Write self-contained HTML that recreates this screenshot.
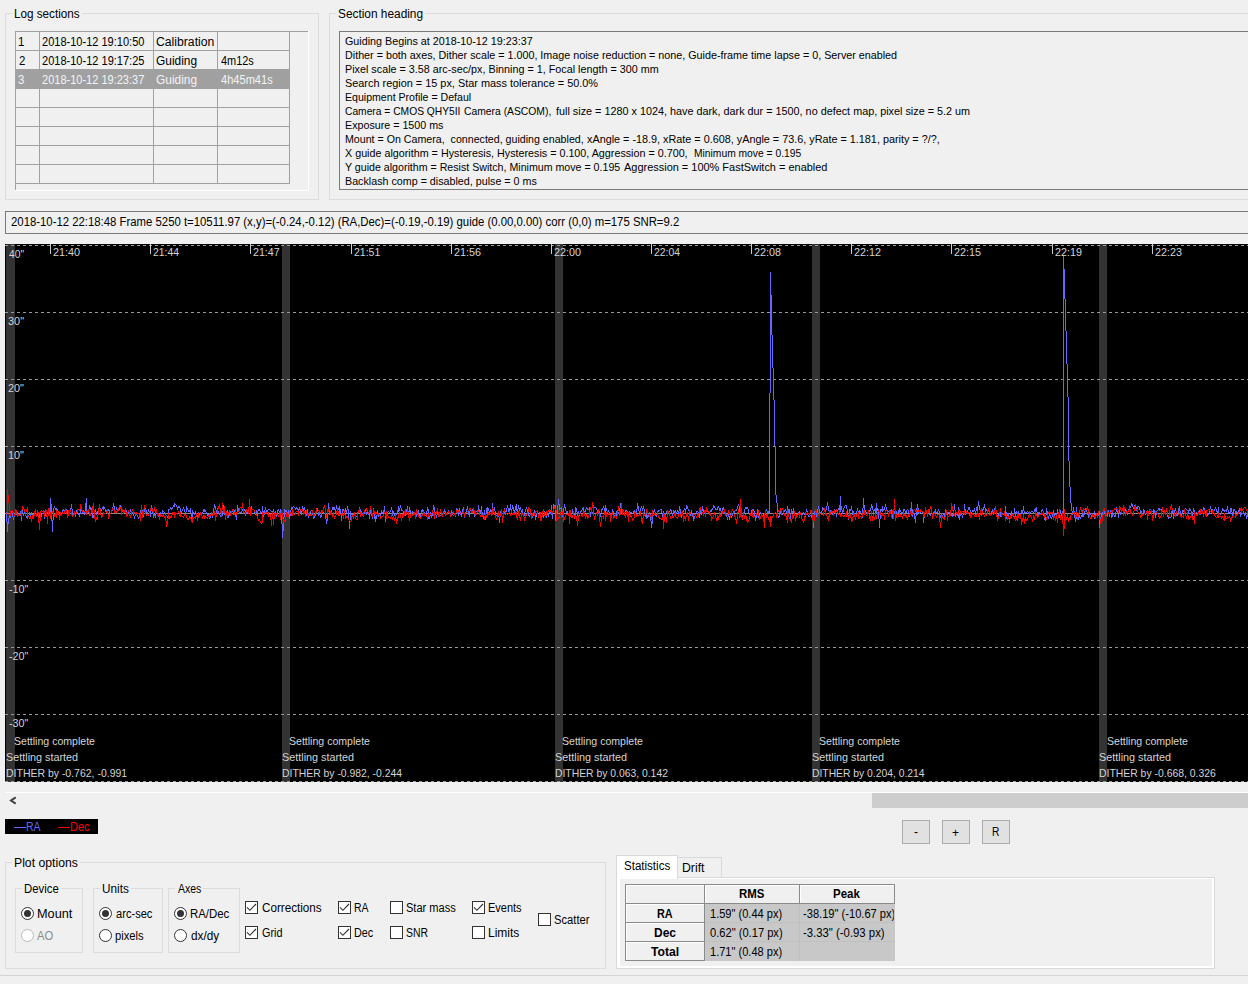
<!DOCTYPE html>
<html lang="en"><head><meta charset="utf-8"><title>PHD2 Log Viewer</title>
<style>
html,body{margin:0;padding:0}
body{width:1248px;height:984px;overflow:hidden;background:#f0f0f0;position:relative;font-family:"Liberation Sans",sans-serif;color:#000}
.t{position:absolute;white-space:pre;line-height:16px;height:16px;transform-origin:0 0}
.ui{font-size:12px}
.ar{font-size:11px}
.gl{color:#d4d4d4}
.gt{background:#f0f0f0}
.sel{color:#f4f4f4}
.dis{color:#8c8c8c}
.b{font-weight:bold}
.lra{color:#6464ff}
.ldec{color:#ff0000}
.box{position:absolute;box-sizing:border-box}
.gb{border:1px solid #dcdcdc}
.gap{position:absolute;background:#f0f0f0;height:3px}
.cb{position:absolute;width:13px;height:13px;box-sizing:border-box;border:1px solid #333;background:#fff}
.rb{position:absolute;width:13px;height:13px;box-sizing:border-box;border:1px solid #333;background:#fff;border-radius:50%}
.rb.on::after{content:"";position:absolute;left:2px;top:2px;width:7px;height:7px;border-radius:50%;background:#333}
.rb.off{border-color:#bcbcbc}
.btn{position:absolute;box-sizing:border-box;border:1px solid #adadad;background:#e1e1e1}
svg{position:absolute;display:block}
</style></head><body>

<div class="box gb" style="left:5px;top:13px;width:314px;height:187px"></div>
<div class="gap" style="left:12px;top:12px;width:70px"></div>
<div class="box gb" style="left:329px;top:13px;width:972px;height:187px"></div>
<div class="gap" style="left:336px;top:12px;width:89px"></div>
<div class="box gb" style="left:5px;top:862px;width:601px;height:107px"></div>
<div class="gap" style="left:12px;top:861px;width:68px"></div>
<div class="box gb" style="left:15px;top:888px;width:68px;height:65px"></div>
<div class="gap" style="left:22px;top:887px;width:39px"></div>
<div class="box gb" style="left:93px;top:888px;width:70px;height:65px"></div>
<div class="gap" style="left:100px;top:887px;width:31px"></div>
<div class="box gb" style="left:168px;top:888px;width:72px;height:65px"></div>
<div class="gap" style="left:175px;top:887px;width:28px"></div>
<svg style="left:15px;top:31px" width="294" height="160" shape-rendering="crispEdges">
<rect x="1" y="38" width="274" height="19" fill="#a0a0a0"/>
<path d="M0 0.5H275M0 19.5H275M0 38.5H275M0 57.5H275M0 76.5H275M0 95.5H275M0 114.5H275M0 133.5H275M0 152.5H275M0.5 0V159M24.5 0V153M138.5 0V153M202.5 0V153M274.5 0V153" stroke="#a0a0a0" fill="none"/>
<path d="M0 0.5H294" stroke="#a0a0a0" fill="none"/>
<path d="M0 159.5H294M293.5 0V160" stroke="#ffffff" fill="none"/>
</svg>
<div class="box" style="left:339px;top:31px;width:960px;height:159px;border:1px solid #7a7a7a;background:#f0f0f0"></div>
<div class="box" style="left:5px;top:211px;width:1300px;height:23px;border:1px solid #7a7a7a;background:#f0f0f0"></div>
<svg style="left:5px;top:244px" width="1243" height="538" shape-rendering="crispEdges">
<rect width="1243" height="538" fill="#000"/>
<rect x="1" y="0" width="9" height="538" fill="#333333"/>
<rect x="277" y="0" width="8" height="538" fill="#333333"/>
<rect x="550" y="0" width="8" height="538" fill="#333333"/>
<rect x="807" y="0" width="8" height="538" fill="#333333"/>
<rect x="1094" y="0" width="8" height="538" fill="#333333"/>
<path d="M0 1.5H1243M0 68.5H1243M0 135.5H1243M0 202.5H1243M0 336.5H1243M0 403.5H1243M0 470.5H1243M0 537.5H1243" stroke="#989898" stroke-dasharray="3 3" fill="none"/>
<path d="M0 269.5H1243" stroke="#8c8c8c" fill="none"/>
<path d="M45.5 0V10M145.5 0V10M245.5 0V10M346.5 0V10M446.5 0V10M546.5 0V10M646.5 0V10M746.5 0V10M846.5 0V10M946.5 0V10M1047.5 0V10M1147.5 0V10" stroke="#c8c8c8" fill="none"/>
<path d="M1.5 268v10M2.5 278v10M3.5 274v6M4.5 271v3M5.5 271v3M6.5 267v4M7.5 269v4M8.5 273v3M9.5 270v3M10.5 265v5M11.5 268v3M12.5 268v2M13.5 270v2M14.5 270v2M15.5 267v5M16.5 269v8M17.5 266v3M18.5 269v3M19.5 268v2M20.5 269v3M21.5 272v2M22.5 269v6M23.5 271v2M24.5 268v3M25.5 270v3M26.5 268v3M27.5 270v2M28.5 270v4M29.5 267v3M30.5 268v2M31.5 269v1M32.5 269v3M33.5 272v7M34.5 269v5M35.5 272v3M36.5 270v3M37.5 269v1M38.5 269v1M39.5 267v8M40.5 269v3M41.5 270v1M42.5 268v2M43.5 266v2M44.5 267v2M45.5 254v17M46.5 260v17M47.5 276v12M48.5 264v12M49.5 262v2M50.5 264v2M51.5 264v2M52.5 265v2M53.5 267v1M54.5 268v2M55.5 270v2M56.5 269v3M57.5 266v3M58.5 265v2M59.5 266v1M60.5 264v2M61.5 265v1M62.5 266v3M63.5 267v5M64.5 268v1M65.5 264v4M66.5 260v5M67.5 265v6M68.5 269v2M69.5 267v3M70.5 270v3M71.5 266v4M72.5 268v2M73.5 269v2M74.5 270v3M75.5 263v7M76.5 264v3M77.5 267v2M78.5 266v2M79.5 267v4M80.5 259v8M81.5 254v13M82.5 267v2M83.5 265v4M84.5 261v4M85.5 263v3M86.5 264v5M87.5 269v5M88.5 271v3M89.5 268v4M90.5 265v3M91.5 268v3M92.5 267v2M93.5 265v3M94.5 261v4M95.5 264v4M96.5 265v2M97.5 263v2M98.5 262v4M99.5 263v2M100.5 265v3M101.5 266v1M102.5 267v1M103.5 265v2M104.5 266v5M105.5 269v1M106.5 267v2M107.5 263v4M108.5 259v4M109.5 262v5M110.5 266v4M111.5 263v3M112.5 265v3M113.5 266v1M114.5 263v3M115.5 261v2M116.5 262v9M117.5 265v3M118.5 266v2M119.5 267v1M120.5 266v1M121.5 266v3M122.5 269v3M123.5 268v2M124.5 268v2M125.5 265v3M126.5 268v3M127.5 268v2M128.5 269v3M129.5 272v3M130.5 269v3M131.5 270v1M132.5 271v2M133.5 273v2M134.5 269v4M135.5 266v3M136.5 267v1M137.5 266v3M138.5 268v5M139.5 262v6M140.5 264v3M141.5 266v3M142.5 268v2M143.5 265v3M144.5 267v2M145.5 265v8M146.5 261v6M147.5 264v6M148.5 270v4M149.5 270v2M150.5 270v4M151.5 265v5M152.5 269v2M153.5 271v2M154.5 270v2M155.5 268v2M156.5 269v1M157.5 266v4M158.5 267v1M159.5 268v1M160.5 269v2M161.5 271v1M162.5 272v2M163.5 265v7M164.5 265v1M165.5 263v2M166.5 264v2M167.5 263v2M168.5 261v2M169.5 259v4M170.5 260v1M171.5 261v2M172.5 263v3M173.5 262v2M174.5 262v2M175.5 264v4M176.5 267v2M177.5 265v2M178.5 263v2M179.5 265v3M180.5 268v1M181.5 262v6M182.5 264v2M183.5 266v2M184.5 266v2M185.5 264v5M186.5 269v6M187.5 266v7M188.5 268v2M189.5 269v2M190.5 267v2M191.5 269v3M192.5 271v2M193.5 268v4M194.5 270v2M195.5 268v2M196.5 269v2M197.5 268v2M198.5 265v3M199.5 265v3M200.5 266v2M201.5 268v2M202.5 270v2M203.5 270v1M204.5 269v6M205.5 271v3M206.5 268v3M207.5 270v4M208.5 264v6M209.5 260v4M210.5 262v4M211.5 266v3M212.5 264v3M213.5 267v3M214.5 269v2M215.5 271v2M216.5 269v4M217.5 267v5M218.5 261v6M219.5 265v6M220.5 271v3M221.5 270v2M222.5 266v8M223.5 270v4M224.5 269v3M225.5 267v2M226.5 267v1M227.5 267v1M228.5 268v3M229.5 266v3M230.5 269v4M231.5 269v7M232.5 261v8M233.5 264v4M234.5 268v2M235.5 268v1M236.5 267v2M237.5 265v2M238.5 267v2M239.5 265v2M240.5 266v6M241.5 268v2M242.5 268v1M243.5 263v5M244.5 258v5M245.5 263v6M246.5 262v5M247.5 265v1M248.5 265v1M249.5 266v3M250.5 269v2M251.5 266v3M252.5 267v5M253.5 265v2M254.5 265v2M255.5 267v3M256.5 268v1M257.5 262v7M258.5 267v6M259.5 266v5M260.5 263v3M261.5 266v3M262.5 266v2M263.5 265v1M264.5 265v1M265.5 266v1M266.5 267v1M267.5 267v1M268.5 265v3M269.5 268v5M270.5 267v3M271.5 270v3M272.5 266v4M273.5 265v2M274.5 267v4M275.5 265v10M276.5 266v14M277.5 280v14M278.5 273v14M279.5 265v8M280.5 266v2M281.5 266v2M282.5 268v3M283.5 266v4M284.5 270v5M285.5 266v6M286.5 263v3M287.5 263v3M288.5 262v1M289.5 263v1M290.5 264v2M291.5 263v2M292.5 264v2M293.5 265v3M294.5 263v3M295.5 266v3M296.5 267v4M297.5 262v5M298.5 264v3M299.5 263v3M300.5 266v3M301.5 269v3M302.5 265v4M303.5 269v5M304.5 269v3M305.5 267v2M306.5 266v1M307.5 267v4M308.5 271v4M309.5 272v2M310.5 269v3M311.5 266v3M312.5 264v4M313.5 268v4M314.5 268v3M315.5 271v3M316.5 267v6M317.5 267v1M318.5 268v1M319.5 269v1M320.5 270v5M321.5 275v5M322.5 266v11M323.5 259v7M324.5 265v6M325.5 268v2M326.5 266v2M327.5 263v3M328.5 263v3M329.5 263v3M330.5 265v4M331.5 261v4M332.5 263v3M333.5 264v2M334.5 262v8M335.5 265v6M336.5 271v6M337.5 265v6M338.5 265v2M339.5 267v2M340.5 264v4M341.5 266v4M342.5 262v4M343.5 265v11M344.5 276v9M345.5 267v9M346.5 269v2M347.5 270v2M348.5 269v2M349.5 270v1M350.5 271v2M351.5 272v1M352.5 268v4M353.5 266v3M354.5 263v3M355.5 265v3M356.5 267v2M357.5 269v3M358.5 268v4M359.5 267v3M360.5 265v3M361.5 268v3M362.5 268v2M363.5 269v2M364.5 266v9M365.5 265v5M366.5 268v4M367.5 270v5M368.5 264v6M369.5 269v6M370.5 272v6M371.5 271v4M372.5 266v5M373.5 269v4M374.5 271v1M375.5 269v3M376.5 266v3M377.5 268v2M378.5 266v3M379.5 262v8M380.5 270v8M381.5 268v6M382.5 268v1M383.5 267v1M384.5 268v1M385.5 266v2M386.5 263v3M387.5 266v6M388.5 267v3M389.5 269v3M390.5 270v1M391.5 269v2M392.5 266v3M393.5 262v6M394.5 264v3M395.5 261v3M396.5 264v3M397.5 266v1M398.5 267v2M399.5 268v4M400.5 269v3M401.5 265v4M402.5 262v5M403.5 267v6M404.5 263v5M405.5 266v3M406.5 268v2M407.5 267v2M408.5 268v1M409.5 269v1M410.5 270v2M411.5 268v5M412.5 268v3M413.5 266v4M414.5 270v4M415.5 270v3M416.5 266v4M417.5 265v3M418.5 266v2M419.5 268v2M420.5 269v1M421.5 267v4M422.5 263v4M423.5 265v10M424.5 272v3M425.5 268v4M426.5 271v3M427.5 266v6M428.5 261v5M429.5 263v7M430.5 268v3M431.5 271v3M432.5 268v3M433.5 269v2M434.5 271v2M435.5 271v1M436.5 270v1M437.5 269v1M438.5 268v2M439.5 265v3M440.5 267v4M441.5 269v1M442.5 268v2M443.5 266v2M444.5 268v2M445.5 269v2M446.5 266v3M447.5 268v3M448.5 271v1M449.5 269v2M450.5 269v4M451.5 264v5M452.5 265v4M453.5 268v4M454.5 264v4M455.5 267v4M456.5 270v3M457.5 265v5M458.5 263v6M459.5 269v5M460.5 268v3M461.5 265v3M462.5 262v4M463.5 266v5M464.5 267v6M465.5 266v1M466.5 267v2M467.5 265v2M468.5 266v3M469.5 269v4M470.5 268v3M471.5 267v1M472.5 266v4M473.5 261v5M474.5 265v4M475.5 266v3M476.5 262v6M477.5 268v5M478.5 271v4M479.5 266v5M480.5 270v6M481.5 264v6M482.5 263v9M483.5 264v3M484.5 267v2M485.5 265v3M486.5 266v6M487.5 259v10M488.5 265v3M489.5 263v4M490.5 267v4M491.5 271v1M492.5 269v2M493.5 267v6M494.5 273v6M495.5 267v6M496.5 269v2M497.5 269v1M498.5 267v2M499.5 264v6M500.5 267v4M501.5 264v4M502.5 261v3M503.5 264v4M504.5 264v3M505.5 260v6M506.5 265v3M507.5 261v4M508.5 263v4M509.5 266v3M510.5 262v4M511.5 260v7M512.5 265v3M513.5 261v4M514.5 264v3M515.5 263v3M516.5 266v3M517.5 265v6M518.5 271v2M519.5 268v4M520.5 265v3M521.5 263v2M522.5 265v3M523.5 265v7M524.5 271v2M525.5 269v2M526.5 270v2M527.5 272v2M528.5 269v3M529.5 266v5M530.5 271v5M531.5 269v4M532.5 267v3M533.5 270v4M534.5 268v3M535.5 269v3M536.5 272v2M537.5 272v1M538.5 271v3M539.5 267v4M540.5 268v3M541.5 270v4M542.5 269v2M543.5 270v3M544.5 267v3M545.5 268v2M546.5 261v10M547.5 268v7M548.5 260v8M549.5 261v2M550.5 261v16M551.5 270v5M552.5 261v9M553.5 255v6M554.5 260v6M555.5 264v1M556.5 263v5M557.5 268v5M558.5 264v5M559.5 260v4M560.5 263v4M561.5 267v2M562.5 267v2M563.5 269v3M564.5 269v3M565.5 266v3M566.5 269v3M567.5 265v4M568.5 267v3M569.5 270v3M570.5 263v8M571.5 264v4M572.5 268v4M573.5 267v3M574.5 269v3M575.5 267v3M576.5 266v2M577.5 264v2M578.5 263v4M579.5 267v4M580.5 265v3M581.5 263v2M582.5 264v2M583.5 265v1M584.5 263v5M585.5 268v5M586.5 266v4M587.5 268v2M588.5 263v5M589.5 263v1M590.5 263v1M591.5 264v2M592.5 266v3M593.5 269v1M594.5 267v4M595.5 269v4M596.5 265v4M597.5 264v2M598.5 262v2M599.5 264v4M600.5 261v10M601.5 264v3M602.5 267v1M603.5 266v2M604.5 268v3M605.5 269v5M606.5 269v4M607.5 265v4M608.5 267v4M609.5 271v3M610.5 269v3M611.5 267v5M612.5 266v2M613.5 268v2M614.5 264v5M615.5 259v5M616.5 264v5M617.5 265v6M618.5 269v1M619.5 268v2M620.5 266v2M621.5 266v1M622.5 267v2M623.5 269v6M624.5 267v4M625.5 268v1M626.5 268v1M627.5 269v1M628.5 267v2M629.5 266v5M630.5 267v2M631.5 265v6M632.5 259v6M633.5 262v5M634.5 267v3M635.5 264v5M636.5 262v2M637.5 264v3M638.5 262v3M639.5 265v4M640.5 269v4M641.5 269v6M642.5 271v3M643.5 270v3M644.5 268v2M645.5 270v7M646.5 277v7M647.5 270v10M648.5 267v3M649.5 265v3M650.5 268v4M651.5 270v3M652.5 267v3M653.5 266v2M654.5 266v1M655.5 265v1M656.5 265v4M657.5 269v4M658.5 267v5M659.5 269v2M660.5 269v2M661.5 267v2M662.5 266v1M663.5 267v1M664.5 267v1M665.5 265v2M666.5 266v3M667.5 269v3M668.5 266v3M669.5 267v2M670.5 266v4M671.5 268v2M672.5 266v2M673.5 267v4M674.5 262v5M675.5 265v5M676.5 270v4M677.5 268v3M678.5 266v2M679.5 264v2M680.5 265v4M681.5 261v4M682.5 262v3M683.5 265v2M684.5 267v3M685.5 269v3M686.5 266v3M687.5 269v4M688.5 271v6M689.5 272v3M690.5 270v2M691.5 267v3M692.5 267v1M693.5 268v2M694.5 269v5M695.5 266v4M696.5 267v4M697.5 262v5M698.5 265v3M699.5 268v2M700.5 268v1M701.5 267v1M702.5 267v1M703.5 268v1M704.5 268v2M705.5 266v2M706.5 265v3M707.5 264v2M708.5 261v3M709.5 262v2M710.5 264v2M711.5 265v1M712.5 263v3M713.5 262v2M714.5 264v3M715.5 264v3M716.5 267v3M717.5 264v5M718.5 263v3M719.5 266v4M720.5 270v2M721.5 270v3M722.5 273v3M723.5 269v4M724.5 272v4M725.5 270v3M726.5 272v2M727.5 269v3M728.5 268v1M729.5 267v2M730.5 266v1M731.5 265v2M732.5 262v3M733.5 260v2M734.5 262v6M735.5 267v5M736.5 268v3M737.5 271v2M738.5 269v3M739.5 265v4M740.5 263v2M741.5 263v2M742.5 263v2M743.5 265v4M744.5 269v2M745.5 269v2M746.5 266v3M747.5 265v1M748.5 265v2M749.5 267v5M750.5 272v5M751.5 269v5M752.5 265v4M753.5 269v5M754.5 270v2M755.5 268v2M756.5 269v2M757.5 271v1M758.5 270v2M759.5 271v3M760.5 267v4M761.5 265v2M762.5 267v3M763.5 267v2M764.5 149v121M765.5 28v121M766.5 51v40M767.5 91v33M768.5 124v32M769.5 156v46M770.5 202v49M771.5 251v8M772.5 259v13M773.5 272v2M774.5 270v3M775.5 267v3M776.5 269v2M777.5 270v1M778.5 268v2M779.5 266v2M780.5 265v2M781.5 267v2M782.5 262v6M783.5 265v4M784.5 265v5M785.5 270v5M786.5 265v5M787.5 267v2M788.5 264v6M789.5 270v2M790.5 272v3M791.5 270v3M792.5 270v1M793.5 268v2M794.5 267v3M795.5 268v1M796.5 269v2M797.5 270v1M798.5 268v2M799.5 269v2M800.5 268v5M801.5 265v3M802.5 267v4M803.5 271v2M804.5 272v1M805.5 271v1M806.5 269v5M807.5 272v4M808.5 276v8M809.5 267v9M810.5 265v4M811.5 269v4M812.5 265v5M813.5 262v3M814.5 265v4M815.5 268v1M816.5 267v3M817.5 263v4M818.5 264v2M819.5 264v2M820.5 266v2M821.5 262v4M822.5 258v4M823.5 262v5M824.5 267v3M825.5 266v2M826.5 268v2M827.5 269v2M828.5 267v2M829.5 265v3M830.5 266v4M831.5 270v3M832.5 266v4M833.5 264v2M834.5 261v8M835.5 252v16M836.5 262v4M837.5 266v4M838.5 264v4M839.5 262v2M840.5 261v1M841.5 261v4M842.5 265v7M843.5 271v5M844.5 265v6M845.5 265v2M846.5 262v4M847.5 266v5M848.5 267v2M849.5 269v1M850.5 269v1M851.5 267v2M852.5 264v3M853.5 267v6M854.5 266v4M855.5 267v2M856.5 269v2M857.5 264v10M858.5 254v10M859.5 261v8M860.5 266v2M861.5 268v1M862.5 269v2M863.5 268v2M864.5 266v2M865.5 264v3M866.5 260v4M867.5 262v4M868.5 266v3M869.5 265v2M870.5 264v5M871.5 259v11M872.5 264v3M873.5 265v10M874.5 275v9M875.5 265v10M876.5 265v2M877.5 262v6M878.5 265v2M879.5 263v3M880.5 260v3M881.5 263v3M882.5 266v1M883.5 267v1M884.5 266v1M885.5 266v1M886.5 265v5M887.5 270v5M888.5 265v7M889.5 267v3M890.5 269v3M891.5 267v3M892.5 269v2M893.5 266v3M894.5 264v6M895.5 266v2M896.5 268v3M897.5 268v2M898.5 265v3M899.5 265v2M900.5 267v5M901.5 266v3M902.5 265v1M903.5 266v4M904.5 269v4M905.5 264v5M906.5 258v13M907.5 265v8M908.5 267v3M909.5 269v6M910.5 272v7M911.5 264v8M912.5 260v11M913.5 264v5M914.5 268v1M915.5 268v1M916.5 267v1M917.5 268v1M918.5 269v10M919.5 268v6M920.5 269v1M921.5 269v1M922.5 269v3M923.5 266v3M924.5 267v4M925.5 270v2M926.5 267v3M927.5 270v3M928.5 268v3M929.5 267v2M930.5 265v5M931.5 268v1M932.5 267v2M933.5 265v2M934.5 267v4M935.5 271v3M936.5 269v6M937.5 271v2M938.5 269v2M939.5 269v4M940.5 265v4M941.5 267v3M942.5 268v3M943.5 268v2M944.5 268v1M945.5 266v3M946.5 269v3M947.5 270v3M948.5 266v6M949.5 260v6M950.5 266v7M951.5 268v3M952.5 270v2M953.5 263v11M954.5 269v7M955.5 267v5M956.5 268v3M957.5 271v3M958.5 267v4M959.5 260v11M960.5 265v6M961.5 269v1M962.5 266v3M963.5 263v3M964.5 263v3M965.5 266v3M966.5 268v1M967.5 266v2M968.5 266v2M969.5 264v3M970.5 267v4M971.5 263v4M972.5 262v5M973.5 257v5M974.5 261v5M975.5 266v3M976.5 269v3M977.5 265v4M978.5 263v3M979.5 260v4M980.5 264v4M981.5 265v2M982.5 266v1M983.5 266v2M984.5 268v3M985.5 269v1M986.5 267v2M987.5 265v3M988.5 268v3M989.5 264v5M990.5 269v1M991.5 268v3M992.5 271v3M993.5 270v2M994.5 268v2M995.5 265v8M996.5 271v2M997.5 269v2M998.5 269v2M999.5 267v2M1000.5 262v10M1001.5 268v7M1002.5 269v3M1003.5 269v5M1004.5 274v5M1005.5 270v5M1006.5 267v5M1007.5 269v3M1008.5 269v4M1009.5 264v5M1010.5 268v5M1011.5 267v3M1012.5 269v5M1013.5 267v4M1014.5 269v2M1015.5 269v3M1016.5 266v3M1017.5 266v4M1018.5 262v5M1019.5 267v2M1020.5 268v1M1021.5 268v1M1022.5 267v1M1023.5 268v2M1024.5 267v3M1025.5 268v1M1026.5 267v1M1027.5 267v1M1028.5 268v2M1029.5 265v3M1030.5 264v5M1031.5 263v5M1032.5 268v6M1033.5 268v3M1034.5 268v1M1035.5 269v1M1036.5 266v5M1037.5 265v2M1038.5 267v5M1039.5 272v4M1040.5 271v6M1041.5 264v7M1042.5 267v5M1043.5 272v3M1044.5 269v3M1045.5 271v3M1046.5 273v2M1047.5 270v3M1048.5 266v8M1049.5 269v3M1050.5 270v1M1051.5 269v4M1052.5 265v4M1053.5 268v4M1054.5 270v4M1055.5 266v4M1056.5 269v3M1057.5 267v3M1058.5 11v259M1059.5 25v30M1060.5 55v32M1061.5 87v33M1062.5 120v33M1063.5 153v64M1064.5 217v26M1065.5 243v16M1066.5 259v8M1067.5 267v4M1068.5 263v4M1069.5 267v7M1070.5 271v7M1071.5 263v12M1072.5 269v3M1073.5 272v4M1074.5 271v3M1075.5 273v2M1076.5 271v2M1077.5 266v7M1078.5 269v4M1079.5 267v4M1080.5 264v3M1081.5 266v2M1082.5 268v3M1083.5 270v4M1084.5 268v2M1085.5 269v2M1086.5 271v2M1087.5 272v1M1088.5 272v1M1089.5 267v8M1090.5 270v3M1091.5 269v2M1092.5 270v1M1093.5 270v2M1094.5 267v17M1095.5 273v7M1096.5 269v4M1097.5 268v3M1098.5 265v3M1099.5 266v3M1100.5 269v3M1101.5 269v2M1102.5 270v3M1103.5 266v4M1104.5 269v4M1105.5 266v4M1106.5 270v4M1107.5 268v5M1108.5 269v2M1109.5 271v2M1110.5 268v5M1111.5 263v5M1112.5 266v4M1113.5 270v4M1114.5 265v5M1115.5 268v3M1116.5 266v3M1117.5 265v1M1118.5 265v2M1119.5 267v2M1120.5 265v2M1121.5 266v2M1122.5 268v3M1123.5 265v3M1124.5 263v2M1125.5 262v2M1126.5 259v3M1127.5 260v3M1128.5 263v2M1129.5 261v2M1130.5 260v5M1131.5 263v4M1132.5 262v3M1133.5 262v1M1134.5 263v3M1135.5 266v3M1136.5 267v3M1137.5 269v3M1138.5 265v4M1139.5 266v3M1140.5 269v2M1141.5 269v1M1142.5 268v4M1143.5 268v1M1144.5 266v2M1145.5 265v1M1146.5 266v1M1147.5 267v1M1148.5 265v5M1149.5 266v4M1150.5 270v4M1151.5 267v4M1152.5 266v1M1153.5 264v2M1154.5 264v3M1155.5 265v1M1156.5 265v2M1157.5 263v4M1158.5 267v4M1159.5 269v1M1160.5 268v3M1161.5 265v3M1162.5 268v5M1163.5 273v2M1164.5 273v1M1165.5 273v1M1166.5 267v6M1167.5 265v5M1168.5 270v5M1169.5 266v5M1170.5 264v3M1171.5 267v5M1172.5 269v3M1173.5 264v5M1174.5 262v5M1175.5 267v6M1176.5 269v3M1177.5 266v3M1178.5 266v2M1179.5 265v1M1180.5 264v1M1181.5 265v1M1182.5 266v1M1183.5 266v4M1184.5 264v3M1185.5 265v2M1186.5 267v3M1187.5 268v4M1188.5 264v4M1189.5 266v4M1190.5 269v1M1191.5 268v1M1192.5 269v2M1193.5 267v2M1194.5 266v2M1195.5 267v4M1196.5 265v2M1197.5 266v3M1198.5 263v3M1199.5 264v3M1200.5 267v4M1201.5 266v7M1202.5 269v3M1203.5 269v2M1204.5 265v4M1205.5 262v3M1206.5 265v3M1207.5 265v4M1208.5 267v1M1209.5 265v2M1210.5 263v2M1211.5 265v3M1212.5 267v3M1213.5 263v8M1214.5 269v1M1215.5 270v1M1216.5 267v3M1217.5 264v3M1218.5 265v2M1219.5 266v2M1220.5 266v1M1221.5 265v3M1222.5 262v4M1223.5 266v4M1224.5 268v1M1225.5 264v6M1226.5 264v4M1227.5 268v4M1228.5 265v4M1229.5 265v2M1230.5 267v3M1231.5 267v2M1232.5 268v2M1233.5 266v3M1234.5 264v4M1235.5 268v5M1236.5 269v2M1237.5 269v1M1238.5 267v2M1239.5 269v3M1240.5 268v3M1241.5 271v4M1242.5 267v6" stroke="#6464ff" fill="none"/>
<path d="M1.5 269v1M2.5 245v24M3.5 251v8M4.5 259v8M5.5 267v5M6.5 269v2M7.5 266v3M8.5 268v2M9.5 270v2M10.5 265v6M11.5 266v4M12.5 270v3M13.5 270v2M14.5 271v1M15.5 270v1M16.5 266v7M17.5 262v4M18.5 263v2M19.5 265v3M20.5 268v3M21.5 265v3M22.5 263v9M23.5 272v1M24.5 273v2M25.5 272v3M26.5 275v3M27.5 271v4M28.5 272v3M29.5 267v5M30.5 265v4M31.5 269v4M32.5 266v4M33.5 268v11M34.5 277v9M35.5 267v10M36.5 266v1M37.5 267v1M38.5 266v3M39.5 268v5M40.5 265v3M41.5 266v7M42.5 272v8M43.5 264v8M44.5 264v4M45.5 268v7M46.5 269v3M47.5 267v2M48.5 268v2M49.5 270v3M50.5 269v3M51.5 266v8M52.5 268v3M53.5 267v4M54.5 271v5M55.5 268v4M56.5 270v2M57.5 268v2M58.5 269v1M59.5 267v3M60.5 264v3M61.5 266v4M62.5 270v4M63.5 266v6M64.5 268v2M65.5 266v2M66.5 268v3M67.5 271v2M68.5 270v2M69.5 267v4M70.5 270v1M71.5 268v2M72.5 265v3M73.5 265v1M74.5 265v2M75.5 260v5M76.5 262v4M77.5 266v2M78.5 268v1M79.5 267v1M80.5 268v1M81.5 267v4M82.5 266v3M83.5 265v3M84.5 268v4M85.5 269v3M86.5 266v3M87.5 262v7M88.5 259v7M89.5 266v9M90.5 275v3M91.5 273v3M92.5 271v5M93.5 264v7M94.5 260v5M95.5 265v6M96.5 271v3M97.5 270v3M98.5 268v2M99.5 269v1M100.5 269v1M101.5 267v2M102.5 265v5M103.5 270v5M104.5 270v3M105.5 269v1M106.5 266v3M107.5 264v2M108.5 264v2M109.5 266v3M110.5 266v3M111.5 267v2M112.5 266v2M113.5 264v3M114.5 261v3M115.5 263v2M116.5 262v9M117.5 265v3M118.5 267v3M119.5 266v3M120.5 264v4M121.5 268v5M122.5 268v4M123.5 266v2M124.5 268v4M125.5 271v3M126.5 267v4M127.5 265v2M128.5 267v3M129.5 268v1M130.5 269v2M131.5 268v2M132.5 269v1M133.5 269v1M134.5 270v4M135.5 269v8M136.5 261v8M137.5 267v7M138.5 265v6M139.5 261v4M140.5 265v5M141.5 270v2M142.5 270v1M143.5 270v2M144.5 267v3M145.5 264v3M146.5 264v2M147.5 265v3M148.5 267v3M149.5 263v4M150.5 266v4M151.5 265v4M152.5 269v3M153.5 269v3M154.5 272v4M155.5 270v3M156.5 271v1M157.5 271v2M158.5 270v2M159.5 272v2M160.5 272v5M161.5 277v6M162.5 275v6M163.5 269v6M164.5 272v3M165.5 272v2M166.5 271v3M167.5 268v3M168.5 268v3M169.5 268v6M170.5 269v2M171.5 269v1M172.5 269v2M173.5 267v2M174.5 269v3M175.5 268v5M176.5 271v1M177.5 272v1M178.5 272v2M179.5 270v2M180.5 270v1M181.5 271v3M182.5 274v2M183.5 274v2M184.5 272v2M185.5 273v2M186.5 275v3M187.5 273v6M188.5 274v1M189.5 273v1M190.5 272v3M191.5 269v4M192.5 273v4M193.5 269v5M194.5 271v2M195.5 268v3M196.5 269v3M197.5 272v3M198.5 271v2M199.5 271v4M200.5 272v1M201.5 273v1M202.5 273v2M203.5 271v2M204.5 270v4M205.5 270v2M206.5 268v2M207.5 270v2M208.5 269v2M209.5 267v4M210.5 271v6M211.5 269v4M212.5 265v4M213.5 262v3M214.5 260v4M215.5 264v5M216.5 266v7M217.5 259v7M218.5 264v5M219.5 262v7M220.5 269v7M221.5 267v5M222.5 268v5M223.5 268v3M224.5 266v3M225.5 269v3M226.5 267v3M227.5 265v2M228.5 265v3M229.5 268v3M230.5 265v3M231.5 268v3M232.5 268v2M233.5 267v1M234.5 264v3M235.5 263v1M236.5 263v3M237.5 259v5M238.5 264v5M239.5 268v1M240.5 268v2M241.5 265v3M242.5 266v2M243.5 263v7M244.5 255v8M245.5 263v9M246.5 265v5M247.5 265v1M248.5 265v1M249.5 266v2M250.5 268v2M251.5 270v2M252.5 272v3M253.5 275v2M254.5 275v2M255.5 277v2M256.5 279v1M257.5 268v11M258.5 269v2M259.5 269v1M260.5 267v2M261.5 268v2M262.5 270v1M263.5 268v5M264.5 270v2M265.5 270v6M266.5 275v7M267.5 268v7M268.5 274v7M269.5 269v6M270.5 271v1M271.5 269v2M272.5 270v2M273.5 271v2M274.5 268v3M275.5 269v7M276.5 266v5M277.5 269v6M278.5 275v4M279.5 276v2M280.5 273v5M281.5 268v5M282.5 269v2M283.5 270v3M284.5 267v3M285.5 268v2M286.5 270v2M287.5 265v7M288.5 267v3M289.5 270v1M290.5 268v2M291.5 267v1M292.5 267v1M293.5 267v5M294.5 267v3M295.5 265v2M296.5 265v1M297.5 265v3M298.5 268v3M299.5 267v3M300.5 270v3M301.5 266v4M302.5 269v3M303.5 270v2M304.5 268v2M305.5 270v2M306.5 269v3M307.5 266v3M308.5 269v4M309.5 270v2M310.5 267v3M311.5 264v5M312.5 267v1M313.5 266v1M314.5 267v2M315.5 268v1M316.5 266v4M317.5 266v3M318.5 263v3M319.5 261v3M320.5 264v6M321.5 270v4M322.5 265v5M323.5 265v3M324.5 263v4M325.5 267v4M326.5 268v2M327.5 270v3M328.5 268v4M329.5 272v3M330.5 271v2M331.5 267v4M332.5 263v4M333.5 267v5M334.5 269v3M335.5 270v1M336.5 270v1M337.5 269v3M338.5 271v4M339.5 266v5M340.5 270v5M341.5 272v2M342.5 272v2M343.5 274v2M344.5 276v1M345.5 277v1M346.5 272v5M347.5 271v2M348.5 272v3M349.5 268v4M350.5 271v4M351.5 275v1M352.5 269v7M353.5 266v3M354.5 264v4M355.5 268v5M356.5 269v2M357.5 270v2M358.5 268v5M359.5 266v2M360.5 267v3M361.5 264v3M362.5 266v2M363.5 268v2M364.5 266v3M365.5 262v4M366.5 265v5M367.5 269v4M368.5 265v4M369.5 267v3M370.5 268v3M371.5 268v2M372.5 270v2M373.5 269v2M374.5 270v2M375.5 272v3M376.5 272v2M377.5 272v1M378.5 270v2M379.5 268v2M380.5 270v3M381.5 267v8M382.5 269v3M383.5 272v2M384.5 273v1M385.5 273v2M386.5 271v2M387.5 273v3M388.5 272v2M389.5 274v3M390.5 270v5M391.5 275v5M392.5 273v4M393.5 270v4M394.5 268v2M395.5 270v4M396.5 274v3M397.5 270v4M398.5 270v3M399.5 267v5M400.5 265v4M401.5 268v3M402.5 265v3M403.5 268v6M404.5 274v3M405.5 270v4M406.5 268v2M407.5 270v2M408.5 269v2M409.5 268v3M410.5 270v5M411.5 265v5M412.5 267v3M413.5 270v3M414.5 272v1M415.5 273v2M416.5 271v2M417.5 270v2M418.5 267v3M419.5 269v3M420.5 271v1M421.5 271v2M422.5 273v3M423.5 269v4M424.5 269v1M425.5 270v1M426.5 269v2M427.5 266v3M428.5 268v4M429.5 268v7M430.5 269v1M431.5 267v3M432.5 264v4M433.5 268v5M434.5 268v5M435.5 265v4M436.5 268v4M437.5 270v3M438.5 267v3M439.5 268v1M440.5 269v3M441.5 269v2M442.5 269v2M443.5 267v2M444.5 268v2M445.5 270v3M446.5 269v3M447.5 269v1M448.5 267v2M449.5 269v2M450.5 269v3M451.5 266v3M452.5 267v3M453.5 266v2M454.5 267v2M455.5 269v1M456.5 268v1M457.5 268v1M458.5 266v4M459.5 269v4M460.5 269v2M461.5 268v1M462.5 267v1M463.5 266v1M464.5 264v2M465.5 264v2M466.5 266v3M467.5 267v2M468.5 264v3M469.5 266v4M470.5 267v5M471.5 269v2M472.5 267v2M473.5 266v2M474.5 268v3M475.5 271v2M476.5 268v5M477.5 271v2M478.5 269v3M479.5 272v4M480.5 269v4M481.5 271v3M482.5 270v3M483.5 268v3M484.5 269v2M485.5 269v1M486.5 268v4M487.5 264v7M488.5 266v3M489.5 268v3M490.5 271v3M491.5 274v2M492.5 271v3M493.5 267v5M494.5 269v3M495.5 269v3M496.5 265v7M497.5 272v7M498.5 268v6M499.5 265v3M500.5 268v1M501.5 269v1M502.5 270v1M503.5 269v1M504.5 267v2M505.5 269v3M506.5 267v2M507.5 269v2M508.5 268v2M509.5 269v2M510.5 267v2M511.5 268v6M512.5 272v4M513.5 267v5M514.5 269v5M515.5 273v4M516.5 268v5M517.5 269v2M518.5 269v4M519.5 273v4M520.5 270v4M521.5 270v2M522.5 268v2M523.5 263v5M524.5 264v1M525.5 265v5M526.5 270v5M527.5 269v3M528.5 268v1M529.5 269v3M530.5 267v3M531.5 267v1M532.5 266v4M533.5 270v4M534.5 270v2M535.5 268v9M536.5 273v4M537.5 267v6M538.5 265v3M539.5 268v4M540.5 272v1M541.5 267v5M542.5 268v1M543.5 266v2M544.5 265v1M545.5 266v2M546.5 266v4M547.5 267v2M548.5 265v3M549.5 262v3M550.5 264v2M551.5 266v11M552.5 275v1M553.5 273v2M554.5 271v3M555.5 268v3M556.5 271v3M557.5 267v4M558.5 268v10M559.5 273v3M560.5 271v2M561.5 270v1M562.5 270v1M563.5 269v3M564.5 266v14M565.5 266v7M566.5 270v4M567.5 271v3M568.5 267v4M569.5 271v4M570.5 271v2M571.5 272v5M572.5 277v5M573.5 271v6M574.5 269v2M575.5 269v1M576.5 270v2M577.5 270v3M578.5 267v3M579.5 268v4M580.5 272v3M581.5 270v3M582.5 271v4M583.5 271v3M584.5 266v5M585.5 263v3M586.5 264v6M587.5 258v6M588.5 261v11M589.5 272v4M590.5 270v3M591.5 268v2M592.5 269v3M593.5 265v4M594.5 269v9M595.5 278v5M596.5 272v6M597.5 272v1M598.5 271v4M599.5 267v4M600.5 269v8M601.5 268v5M602.5 267v2M603.5 269v2M604.5 269v1M605.5 270v8M606.5 270v4M607.5 268v3M608.5 271v4M609.5 272v2M610.5 270v2M611.5 272v3M612.5 267v5M613.5 262v5M614.5 267v5M615.5 265v6M616.5 259v6M617.5 265v6M618.5 266v2M619.5 268v4M620.5 271v3M621.5 267v4M622.5 268v5M623.5 268v10M624.5 268v2M625.5 270v3M626.5 272v2M627.5 274v3M628.5 274v2M629.5 268v6M630.5 267v3M631.5 270v3M632.5 270v2M633.5 271v1M634.5 270v1M635.5 267v5M636.5 272v6M637.5 274v6M638.5 268v6M639.5 270v2M640.5 269v2M641.5 265v4M642.5 267v3M643.5 270v1M644.5 271v2M645.5 271v2M646.5 271v5M647.5 266v6M648.5 271v1M649.5 269v2M650.5 269v1M651.5 270v1M652.5 268v3M653.5 271v3M654.5 273v2M655.5 274v1M656.5 275v1M657.5 273v3M658.5 269v16M659.5 270v8M660.5 271v4M661.5 273v6M662.5 266v7M663.5 267v2M664.5 269v3M665.5 272v3M666.5 274v1M667.5 272v2M668.5 272v2M669.5 269v3M670.5 268v5M671.5 273v1M672.5 273v2M673.5 270v3M674.5 268v2M675.5 270v3M676.5 268v3M677.5 267v5M678.5 272v6M679.5 272v3M680.5 273v4M681.5 269v4M682.5 268v4M683.5 272v5M684.5 266v6M685.5 268v2M686.5 270v2M687.5 272v1M688.5 270v2M689.5 270v1M690.5 270v2M691.5 272v2M692.5 270v2M693.5 269v4M694.5 264v5M695.5 263v3M696.5 265v3M697.5 268v2M698.5 269v3M699.5 266v3M700.5 266v7M701.5 263v5M702.5 265v2M703.5 267v2M704.5 269v2M705.5 269v3M706.5 272v5M707.5 273v2M708.5 271v2M709.5 268v3M710.5 270v4M711.5 274v3M712.5 271v6M713.5 272v4M714.5 268v4M715.5 270v3M716.5 270v2M717.5 267v3M718.5 267v2M719.5 265v3M720.5 268v4M721.5 270v1M722.5 270v2M723.5 266v4M724.5 268v3M725.5 271v3M726.5 267v4M727.5 265v2M728.5 267v3M729.5 270v3M730.5 273v3M731.5 275v5M732.5 268v7M733.5 265v4M734.5 269v5M735.5 255v18M736.5 264v10M737.5 272v4M738.5 268v4M739.5 271v4M740.5 270v3M741.5 272v5M742.5 275v4M743.5 276v2M744.5 272v4M745.5 269v3M746.5 270v2M747.5 266v7M748.5 270v4M749.5 272v1M750.5 271v1M751.5 269v2M752.5 270v3M753.5 266v6M754.5 272v4M755.5 272v3M756.5 269v3M757.5 271v2M758.5 272v6M759.5 269v15M760.5 266v4M761.5 270v4M762.5 270v3M763.5 273v3M764.5 275v3M765.5 272v11M766.5 272v6M767.5 272v2M768.5 269v3M769.5 269v1M770.5 268v1M771.5 269v5M772.5 268v4M773.5 266v2M774.5 267v2M775.5 264v3M776.5 265v5M777.5 264v2M778.5 266v3M779.5 269v3M780.5 270v2M781.5 272v4M782.5 266v13M783.5 269v4M784.5 273v2M785.5 275v2M786.5 275v4M787.5 270v5M788.5 271v3M789.5 267v5M790.5 272v5M791.5 270v4M792.5 271v2M793.5 269v2M794.5 271v3M795.5 268v3M796.5 271v4M797.5 275v2M798.5 277v2M799.5 272v5M800.5 268v4M801.5 269v2M802.5 268v2M803.5 269v1M804.5 269v2M805.5 266v3M806.5 266v5M807.5 271v5M808.5 276v2M809.5 271v6M810.5 265v6M811.5 266v3M812.5 269v4M813.5 271v1M814.5 269v2M815.5 269v1M816.5 270v1M817.5 270v1M818.5 268v4M819.5 264v4M820.5 267v4M821.5 269v3M822.5 272v3M823.5 272v5M824.5 266v7M825.5 268v3M826.5 266v2M827.5 267v2M828.5 269v3M829.5 266v3M830.5 268v2M831.5 265v3M832.5 267v2M833.5 269v2M834.5 266v3M835.5 269v4M836.5 270v2M837.5 271v1M838.5 272v1M839.5 271v2M840.5 269v2M841.5 267v6M842.5 271v2M843.5 272v3M844.5 269v3M845.5 270v4M846.5 274v4M847.5 273v4M848.5 269v4M849.5 270v3M850.5 273v3M851.5 270v3M852.5 269v1M853.5 268v7M854.5 273v1M855.5 272v1M856.5 273v2M857.5 269v4M858.5 266v3M859.5 266v5M860.5 268v3M861.5 271v1M862.5 268v3M863.5 266v4M864.5 270v5M865.5 272v5M866.5 267v5M867.5 272v5M868.5 270v4M869.5 273v3M870.5 269v4M871.5 271v4M872.5 268v3M873.5 266v2M874.5 268v3M875.5 268v3M876.5 271v3M877.5 269v3M878.5 269v3M879.5 271v5M880.5 266v5M881.5 266v1M882.5 267v2M883.5 269v4M884.5 266v4M885.5 267v3M886.5 270v4M887.5 266v4M888.5 265v10M889.5 255v11M890.5 266v11M891.5 270v4M892.5 268v2M893.5 270v3M894.5 268v5M895.5 270v3M896.5 272v1M897.5 272v3M898.5 268v4M899.5 270v2M900.5 270v3M901.5 271v3M902.5 273v3M903.5 270v3M904.5 270v2M905.5 267v3M906.5 267v5M907.5 269v2M908.5 266v3M909.5 265v1M910.5 266v2M911.5 266v2M912.5 264v2M913.5 266v2M914.5 268v2M915.5 265v3M916.5 266v2M917.5 267v1M918.5 268v5M919.5 268v5M920.5 263v5M921.5 266v4M922.5 269v4M923.5 265v4M924.5 265v4M925.5 262v3M926.5 263v6M927.5 269v6M928.5 270v3M929.5 269v1M930.5 270v2M931.5 272v2M932.5 270v2M933.5 270v1M934.5 271v7M935.5 278v6M936.5 271v7M937.5 272v2M938.5 273v2M939.5 273v3M940.5 268v5M941.5 266v5M942.5 271v6M943.5 272v1M944.5 270v2M945.5 266v6M946.5 259v7M947.5 262v5M948.5 267v3M949.5 269v3M950.5 266v3M951.5 268v2M952.5 269v1M953.5 266v5M954.5 265v2M955.5 267v3M956.5 268v1M957.5 267v1M958.5 268v1M959.5 266v5M960.5 269v1M961.5 267v2M962.5 268v2M963.5 268v2M964.5 270v2M965.5 268v6M966.5 271v2M967.5 269v2M968.5 270v1M969.5 271v2M970.5 272v1M971.5 270v3M972.5 267v3M973.5 269v4M974.5 271v5M975.5 266v5M976.5 264v3M977.5 267v4M978.5 270v1M979.5 271v2M980.5 268v3M981.5 270v2M982.5 266v4M983.5 264v4M984.5 266v3M985.5 269v3M986.5 270v1M987.5 268v2M988.5 266v2M989.5 266v4M990.5 262v4M991.5 266v7M992.5 273v4M993.5 272v3M994.5 268v4M995.5 264v4M996.5 268v4M997.5 270v1M998.5 269v1M999.5 267v5M1000.5 272v5M1001.5 270v3M1002.5 273v3M1003.5 272v3M1004.5 275v3M1005.5 271v4M1006.5 272v2M1007.5 270v2M1008.5 269v3M1009.5 272v3M1010.5 275v2M1011.5 272v4M1012.5 268v9M1013.5 270v4M1014.5 271v1M1015.5 270v5M1016.5 275v6M1017.5 274v4M1018.5 270v6M1019.5 275v5M1020.5 273v4M1021.5 275v2M1022.5 274v2M1023.5 271v3M1024.5 267v4M1025.5 271v2M1026.5 273v2M1027.5 275v3M1028.5 271v4M1029.5 272v4M1030.5 267v5M1031.5 269v3M1032.5 272v2M1033.5 271v2M1034.5 270v1M1035.5 270v1M1036.5 268v2M1037.5 269v2M1038.5 267v3M1039.5 270v4M1040.5 271v2M1041.5 273v3M1042.5 270v4M1043.5 268v2M1044.5 267v1M1045.5 268v2M1046.5 270v1M1047.5 268v2M1048.5 270v6M1049.5 272v2M1050.5 274v3M1051.5 271v4M1052.5 274v5M1053.5 268v6M1054.5 265v6M1055.5 271v5M1056.5 272v3M1057.5 269v11M1058.5 280v12M1059.5 265v20M1060.5 271v6M1061.5 273v3M1062.5 270v4M1063.5 274v4M1064.5 273v3M1065.5 271v5M1066.5 270v1M1067.5 269v1M1068.5 267v2M1069.5 268v3M1070.5 271v3M1071.5 268v5M1072.5 273v3M1073.5 269v4M1074.5 266v3M1075.5 263v3M1076.5 265v3M1077.5 267v2M1078.5 264v3M1079.5 265v1M1080.5 266v2M1081.5 264v2M1082.5 262v3M1083.5 265v5M1084.5 270v3M1085.5 273v2M1086.5 273v2M1087.5 270v3M1088.5 270v2M1089.5 271v3M1090.5 272v3M1091.5 269v3M1092.5 271v3M1093.5 267v4M1094.5 271v5M1095.5 275v5M1096.5 277v2M1097.5 271v6M1098.5 265v6M1099.5 264v3M1100.5 267v4M1101.5 269v3M1102.5 266v3M1103.5 268v2M1104.5 269v1M1105.5 268v2M1106.5 266v2M1107.5 266v2M1108.5 266v1M1109.5 264v2M1110.5 265v1M1111.5 264v1M1112.5 265v2M1113.5 266v3M1114.5 262v4M1115.5 263v3M1116.5 266v3M1117.5 264v3M1118.5 261v11M1119.5 263v5M1120.5 267v5M1121.5 267v3M1122.5 268v1M1123.5 266v2M1124.5 261v5M1125.5 265v5M1126.5 268v2M1127.5 270v2M1128.5 267v4M1129.5 262v5M1130.5 260v7M1131.5 265v1M1132.5 266v2M1133.5 268v2M1134.5 269v2M1135.5 271v3M1136.5 269v4M1137.5 270v2M1138.5 270v1M1139.5 269v1M1140.5 269v1M1141.5 267v2M1142.5 266v10M1143.5 267v5M1144.5 265v2M1145.5 267v2M1146.5 266v5M1147.5 271v6M1148.5 270v4M1149.5 269v2M1150.5 267v2M1151.5 268v1M1152.5 269v1M1153.5 270v3M1154.5 273v2M1155.5 272v2M1156.5 267v5M1157.5 263v5M1158.5 268v5M1159.5 266v4M1160.5 267v4M1161.5 264v4M1162.5 267v4M1163.5 271v2M1164.5 266v5M1165.5 262v4M1166.5 260v4M1167.5 264v2M1168.5 266v3M1169.5 269v3M1170.5 270v3M1171.5 267v3M1172.5 270v1M1173.5 270v1M1174.5 268v2M1175.5 270v3M1176.5 273v1M1177.5 272v1M1178.5 270v4M1179.5 265v5M1180.5 268v4M1181.5 272v3M1182.5 268v4M1183.5 271v5M1184.5 273v2M1185.5 272v2M1186.5 269v3M1187.5 272v4M1188.5 272v4M1189.5 268v12M1190.5 269v1M1191.5 270v2M1192.5 270v2M1193.5 268v2M1194.5 268v3M1195.5 265v5M1196.5 266v2M1197.5 267v3M1198.5 270v3M1199.5 266v4M1200.5 269v3M1201.5 266v7M1202.5 266v1M1203.5 265v1M1204.5 266v1M1205.5 267v1M1206.5 268v1M1207.5 266v4M1208.5 266v3M1209.5 269v3M1210.5 272v1M1211.5 273v1M1212.5 271v2M1213.5 269v5M1214.5 272v1M1215.5 272v1M1216.5 273v2M1217.5 272v2M1218.5 274v2M1219.5 269v8M1220.5 272v4M1221.5 274v1M1222.5 272v2M1223.5 273v1M1224.5 272v2M1225.5 274v4M1226.5 273v3M1227.5 272v2M1228.5 270v2M1229.5 269v1M1230.5 270v4M1231.5 270v2M1232.5 270v1M1233.5 268v2M1234.5 267v2M1235.5 264v3M1236.5 263v6M1237.5 265v2M1238.5 264v2M1239.5 263v1M1240.5 263v2M1241.5 265v2M1242.5 267v3" stroke="#ff0000" fill="none"/>
</svg>
<div class="box" style="left:5px;top:792px;width:1243px;height:1px;background:#fff"></div>
<div class="box" style="left:872px;top:793px;width:376px;height:15px;background:#cdcdcd"></div>
<svg style="left:9px;top:796px" width="9" height="10"><path d="M6.7 1.4L2 4.5L6.7 7.6" stroke="#404040" stroke-width="2" fill="none"/></svg>
<div class="box" style="left:5px;top:819px;width:93px;height:15px;background:#000"></div>
<div class="box" style="left:14px;top:827px;width:12px;height:1px;background:#6464ff"></div>
<div class="box" style="left:58px;top:827px;width:12px;height:1px;background:#ff0000"></div>
<div class="btn" style="left:902px;top:820px;width:28px;height:24px"></div>
<div class="btn" style="left:942px;top:820px;width:28px;height:24px"></div>
<div class="btn" style="left:982px;top:820px;width:28px;height:24px"></div>
<div class="rb on" style="left:21px;top:907px"></div>
<div class="rb off" style="left:21px;top:929px"></div>
<div class="rb on" style="left:99px;top:907px"></div>
<div class="rb " style="left:99px;top:929px"></div>
<div class="rb on" style="left:174px;top:907px"></div>
<div class="rb " style="left:174px;top:929px"></div>
<div class="cb" style="left:245px;top:901px"><svg width="11" height="11" style="left:0;top:0"><path d="M1 5.4L3.9 8.3L10 2" stroke="#333" stroke-width="1.15" fill="none"/></svg></div>
<div class="cb" style="left:245px;top:926px"><svg width="11" height="11" style="left:0;top:0"><path d="M1 5.4L3.9 8.3L10 2" stroke="#333" stroke-width="1.15" fill="none"/></svg></div>
<div class="cb" style="left:338px;top:901px"><svg width="11" height="11" style="left:0;top:0"><path d="M1 5.4L3.9 8.3L10 2" stroke="#333" stroke-width="1.15" fill="none"/></svg></div>
<div class="cb" style="left:338px;top:926px"><svg width="11" height="11" style="left:0;top:0"><path d="M1 5.4L3.9 8.3L10 2" stroke="#333" stroke-width="1.15" fill="none"/></svg></div>
<div class="cb" style="left:390px;top:901px"></div>
<div class="cb" style="left:390px;top:926px"></div>
<div class="cb" style="left:472px;top:901px"><svg width="11" height="11" style="left:0;top:0"><path d="M1 5.4L3.9 8.3L10 2" stroke="#333" stroke-width="1.15" fill="none"/></svg></div>
<div class="cb" style="left:472px;top:926px"></div>
<div class="cb" style="left:538px;top:913px"></div>
<div class="box" style="left:616px;top:877px;width:599px;height:92px;border:1px solid #d9d9d9;background:#fff"></div>
<div class="box" style="left:620px;top:879px;width:592px;height:87px;background:#f0f0f0"></div>
<div class="box" style="left:677px;top:857px;width:45px;height:21px;border:1px solid #d9d9d9;background:#f0f0f0"></div>
<div class="box" style="left:616px;top:855px;width:62px;height:24px;border:1px solid #d9d9d9;border-bottom:none;background:#fff"></div>
<svg style="left:625px;top:884px" width="271" height="78" shape-rendering="crispEdges">
<rect x="0" y="0" width="270" height="77" fill="#f0f0f0"/>
<rect x="80" y="20" width="190" height="57" fill="#c8c8c8"/>
<path d="M80 38.5H270M80 57.5H270M174.5 20V77" stroke="#c0c0c0" fill="none"/>
<path d="M1 1.5H269M1 20.5H79M1 39.5H79M1 58.5H79M1.5 1V76M80.5 1V19M175.5 1V19" stroke="#fff" fill="none"/>
<path d="M0 0.5H270M0 19.5H270M0 38.5H80M0 57.5H80M0 76.5H80M0.5 0V77M79.5 0V77M174.5 0V20M269.5 0V20" stroke="#8a8a8a" fill="none"/>
</svg>
<div class="box" style="left:0;top:975px;width:1248px;height:1px;background:#d4d4d4"></div>
<span id="t_logsec" class="t ui gt" style="left:14px;top:6px;transform:scaleX(0.9747);">Log sections</span>
<span id="t_sechead" class="t ui gt" style="left:338px;top:6px;transform:scaleX(0.9881);">Section heading</span>
<span id="r0a" class="t ui" style="left:18px;top:34px;transform:scaleX(0.9500);">1</span>
<span id="r0b" class="t ui" style="left:42px;top:34px;transform:scaleX(0.9190);">2018-10-12 19:10:50</span>
<span id="r0c" class="t ui" style="left:156px;top:34px;transform:scaleX(1.0167);">Calibration</span>
<span id="r1a" class="t ui" style="left:19px;top:53px;transform:scaleX(0.9500);">2</span>
<span id="r1b" class="t ui" style="left:42px;top:53px;transform:scaleX(0.9193);">2018-10-12 19:17:25</span>
<span id="r1c" class="t ui" style="left:156px;top:53px;transform:scaleX(0.9931);">Guiding</span>
<span id="r1d" class="t ui" style="left:221px;top:53px;transform:scaleX(0.9119);">4m12s</span>
<span id="r2a" class="t ui sel" style="left:18px;top:72px;transform:scaleX(0.9500);">3</span>
<span id="r2b" class="t ui sel" style="left:42px;top:72px;transform:scaleX(0.9182);">2018-10-12 19:23:37</span>
<span id="r2c" class="t ui sel" style="left:156px;top:72px;transform:scaleX(0.9931);">Guiding</span>
<span id="r2d" class="t ui sel" style="left:221px;top:72px;transform:scaleX(0.9230);">4h45m41s</span>
<span id="t_status" class="t ui" style="left:11px;top:214px;transform:scaleX(0.9459);">2018-10-12 22:18:48 Frame 5250 t=10511.97 (x,y)=(-0.24,-0.12) (RA,Dec)=(-0.19,-0.19) guide (0.00,0.00) corr (0,0) m=175 SNR=9.2</span>
<span id="t_plot" class="t ui gt" style="left:14px;top:855px;transform:scaleX(1.0180);">Plot options</span>
<span id="t_dev" class="t ui gt" style="left:24px;top:881px;transform:scaleX(0.9472);">Device</span>
<span id="t_units" class="t ui gt" style="left:102px;top:881px;transform:scaleX(0.9804);">Units</span>
<span id="t_axes" class="t ui gt" style="left:178px;top:881px;transform:scaleX(0.8711);">Axes</span>
<span id="t_mount" class="t ui" style="left:37px;top:906px;transform:scaleX(1.0598);">Mount</span>
<span id="t_ao" class="t ui dis" style="left:37px;top:928px;transform:scaleX(0.9365);">AO</span>
<span id="t_arc" class="t ui" style="left:116px;top:906px;transform:scaleX(0.9257);">arc-sec</span>
<span id="t_pix" class="t ui" style="left:115px;top:928px;transform:scaleX(0.9347);">pixels</span>
<span id="t_radec" class="t ui" style="left:190px;top:906px;transform:scaleX(0.9509);">RA/Dec</span>
<span id="t_dxdy" class="t ui" style="left:191px;top:928px;transform:scaleX(0.9820);">dx/dy</span>
<span id="t_corr" class="t ui" style="left:262px;top:900px;transform:scaleX(0.9722);">Corrections</span>
<span id="t_grid" class="t ui" style="left:262px;top:925px;transform:scaleX(0.9030);">Grid</span>
<span id="t_ra" class="t ui" style="left:354px;top:900px;transform:scaleX(0.8703);">RA</span>
<span id="t_dec" class="t ui" style="left:354px;top:925px;transform:scaleX(0.8993);">Dec</span>
<span id="t_star" class="t ui" style="left:406px;top:900px;transform:scaleX(0.9210);">Star mass</span>
<span id="t_snr" class="t ui" style="left:406px;top:925px;transform:scaleX(0.8694);">SNR</span>
<span id="t_events" class="t ui" style="left:488px;top:900px;transform:scaleX(0.9158);">Events</span>
<span id="t_limits" class="t ui" style="left:488px;top:925px;transform:scaleX(0.9998);">Limits</span>
<span id="t_scatter" class="t ui" style="left:554px;top:912px;transform:scaleX(0.9337);">Scatter</span>
<span id="t_stats" class="t ui" style="left:624px;top:858px;transform:scaleX(0.9618);">Statistics</span>
<span id="t_drift" class="t ui" style="left:682px;top:860px;transform:scaleX(1.0212);">Drift</span>
<span id="t_minus" class="t ui" style="left:914px;top:824px;transform:scaleX(1.0000);">-</span>
<span id="t_plus" class="t ui" style="left:952px;top:825px;transform:scaleX(1.0000);">+</span>
<span id="t_R" class="t ui" style="left:992px;top:824px;transform:scaleX(0.8551);">R</span>
<span id="t_lra" class="t ui lra" style="left:26px;top:819px;transform:scaleX(0.8734);">RA</span>
<span id="t_ldec" class="t ui ldec" style="left:70px;top:819px;transform:scaleX(0.9125);">Dec</span>
<span id="s_rms" class="t ui b" style="left:739px;top:886px;transform:scaleX(0.9545);">RMS</span>
<span id="s_peak" class="t ui b" style="left:833px;top:886px;transform:scaleX(0.9560);">Peak</span>
<span id="s_ra" class="t ui b" style="left:657px;top:906px;transform:scaleX(0.9038);">RA</span>
<span id="s_dec" class="t ui b" style="left:654px;top:925px;transform:scaleX(0.9981);">Dec</span>
<span id="s_total" class="t ui b" style="left:651px;top:944px;transform:scaleX(1.0159);">Total</span>
<span id="s_v1" class="t ui" style="left:710px;top:906px;transform:scaleX(0.9211);">1.59&quot; (0.44 px)</span>
<span id="s_v2" class="t ui" style="left:710px;top:925px;transform:scaleX(0.9276);">0.62&quot; (0.17 px)</span>
<span id="s_v3" class="t ui" style="left:710px;top:944px;transform:scaleX(0.9211);">1.71&quot; (0.48 px)</span>
<div class="box" style="left:0;top:900px;width:894px;height:24px;overflow:hidden"><span id="s_p1" class="t ui" style="left:803px;top:6px;transform:scaleX(0.9261);">-38.19&quot; (-10.67 px)</span></div>
<span id="s_p2" class="t ui" style="left:803px;top:925px;transform:scaleX(0.9454);">-3.33&quot; (-0.93 px)</span>
<span id="h0" class="t ar" style="left:345px;top:33px;transform:scaleX(0.9770);">Guiding Begins at 2018-10-12 19:23:37</span>
<span id="h1" class="t ar" style="left:345px;top:47px;transform:scaleX(0.9771);">Dither = both axes, Dither scale = 1.000, Image noise reduction = none, Guide-frame time lapse = 0, Server enabled</span>
<span id="h2" class="t ar" style="left:345px;top:61px;transform:scaleX(0.9798);">Pixel scale = 3.58 arc-sec/px, Binning = 1, Focal length = 300 mm</span>
<span id="h3" class="t ar" style="left:345px;top:75px;transform:scaleX(0.9899);">Search region = 15 px, Star mass tolerance = 50.0%</span>
<span id="h4" class="t ar" style="left:345px;top:89px;transform:scaleX(0.9615);">Equipment Profile = Defaul</span>
<span id="h5a" class="t ar" style="left:345px;top:103px;transform:scaleX(0.9328);">Camera = CMOS QHY5II</span>
<span id="h5b" class="t ar" style="left:464px;top:103px;transform:scaleX(0.9396);">Camera (ASCOM),</span>
<span id="h5c" class="t ar" style="left:556px;top:103px;transform:scaleX(0.9836);">full size = 1280 x 1024, have dark, dark dur = 1500, no defect map, pixel size = 5.2 um</span>
<span id="h6" class="t ar" style="left:345px;top:117px;transform:scaleX(0.9726);">Exposure = 1500 ms</span>
<span id="h7a" class="t ar" style="left:345px;top:131px;transform:scaleX(0.9674);">Mount = On Camera,  connected, guiding enabled,</span>
<span id="h7b" class="t ar" style="left:587px;top:131px;transform:scaleX(0.9835);">xAngle = -18.9, xRate = 0.608, yAngle = 73.6, yRate = 1.181, parity = ?/?,</span>
<span id="h8a" class="t ar" style="left:345px;top:145px;transform:scaleX(0.9770);">X guide algorithm = Hysteresis, Hysteresis = 0.100, Aggression = 0.700,</span>
<span id="h8b" class="t ar" style="left:694px;top:145px;transform:scaleX(0.9347);">Minimum move = 0.195</span>
<span id="h9a" class="t ar" style="left:345px;top:159px;transform:scaleX(0.9667);">Y guide algorithm = Resist Switch, Minimum move = 0.195</span>
<span id="h9b" class="t ar" style="left:624px;top:159px;transform:scaleX(0.9961);">Aggression = 100% FastSwitch = enabled</span>
<span id="h10" class="t ar" style="left:345px;top:173px;transform:scaleX(0.9740);">Backlash comp = disabled, pulse = 0 ms</span>
<span id="tm0" class="t ar gl" style="left:53px;top:244px;transform:scaleX(0.9819);">21:40</span>
<span id="tm1" class="t ar gl" style="left:153px;top:244px;transform:scaleX(0.9424);">21:44</span>
<span id="tm2" class="t ar gl" style="left:253px;top:244px;transform:scaleX(0.9687);">21:47</span>
<span id="tm3" class="t ar gl" style="left:354px;top:244px;transform:scaleX(0.9527);">21:51</span>
<span id="tm4" class="t ar gl" style="left:454px;top:244px;transform:scaleX(0.9803);">21:56</span>
<span id="tm5" class="t ar gl" style="left:554px;top:244px;transform:scaleX(0.9819);">22:00</span>
<span id="tm6" class="t ar gl" style="left:654px;top:244px;transform:scaleX(0.9424);">22:04</span>
<span id="tm7" class="t ar gl" style="left:754px;top:244px;transform:scaleX(0.9784);">22:08</span>
<span id="tm8" class="t ar gl" style="left:854px;top:244px;transform:scaleX(0.9808);">22:12</span>
<span id="tm9" class="t ar gl" style="left:954px;top:244px;transform:scaleX(0.9790);">22:15</span>
<span id="tm10" class="t ar gl" style="left:1055px;top:244px;transform:scaleX(0.9768);">22:19</span>
<span id="tm11" class="t ar gl" style="left:1155px;top:244px;transform:scaleX(0.9781);">22:23</span>
<span id="y0" class="t ar gl" style="left:9px;top:246px;transform:scaleX(0.9298);">40&quot;</span>
<span id="y1" class="t ar gl" style="left:8px;top:313px;transform:scaleX(0.9914);">30&quot;</span>
<span id="y2" class="t ar gl" style="left:8px;top:380px;transform:scaleX(0.9891);">20&quot;</span>
<span id="y3" class="t ar gl" style="left:8px;top:447px;transform:scaleX(0.9886);">10&quot;</span>
<span id="y5" class="t ar gl" style="left:9px;top:581px;transform:scaleX(0.9766);">-10&quot;</span>
<span id="y6" class="t ar gl" style="left:9px;top:648px;transform:scaleX(0.9766);">-20&quot;</span>
<span id="y7" class="t ar gl" style="left:9px;top:715px;transform:scaleX(0.9766);">-30&quot;</span>
<span id="sc0" class="t ar gl" style="left:14px;top:733px;transform:scaleX(0.9595);">Settling complete</span>
<span id="ss0" class="t ar gl" style="left:6px;top:749px;transform:scaleX(0.9826);">Settling started</span>
<span id="dt0" class="t ar gl" style="left:6px;top:765px;transform:scaleX(0.9524);">DITHER by -0.762, -0.991</span>
<span id="sc1" class="t ar gl" style="left:289px;top:733px;transform:scaleX(0.9595);">Settling complete</span>
<span id="ss1" class="t ar gl" style="left:282px;top:749px;transform:scaleX(0.9826);">Settling started</span>
<span id="dt1" class="t ar gl" style="left:282px;top:765px;transform:scaleX(0.9438);">DITHER by -0.982, -0.244</span>
<span id="sc2" class="t ar gl" style="left:562px;top:733px;transform:scaleX(0.9595);">Settling complete</span>
<span id="ss2" class="t ar gl" style="left:555px;top:749px;transform:scaleX(0.9826);">Settling started</span>
<span id="dt2" class="t ar gl" style="left:555px;top:765px;transform:scaleX(0.9422);">DITHER by 0.063, 0.142</span>
<span id="sc3" class="t ar gl" style="left:819px;top:733px;transform:scaleX(0.9595);">Settling complete</span>
<span id="ss3" class="t ar gl" style="left:812px;top:749px;transform:scaleX(0.9826);">Settling started</span>
<span id="dt3" class="t ar gl" style="left:812px;top:765px;transform:scaleX(0.9395);">DITHER by 0.204, 0.214</span>
<span id="sc4" class="t ar gl" style="left:1107px;top:733px;transform:scaleX(0.9595);">Settling complete</span>
<span id="ss4" class="t ar gl" style="left:1099px;top:749px;transform:scaleX(0.9826);">Settling started</span>
<span id="dt4" class="t ar gl" style="left:1099px;top:765px;transform:scaleX(0.9459);">DITHER by -0.668, 0.326</span>
</body></html>
